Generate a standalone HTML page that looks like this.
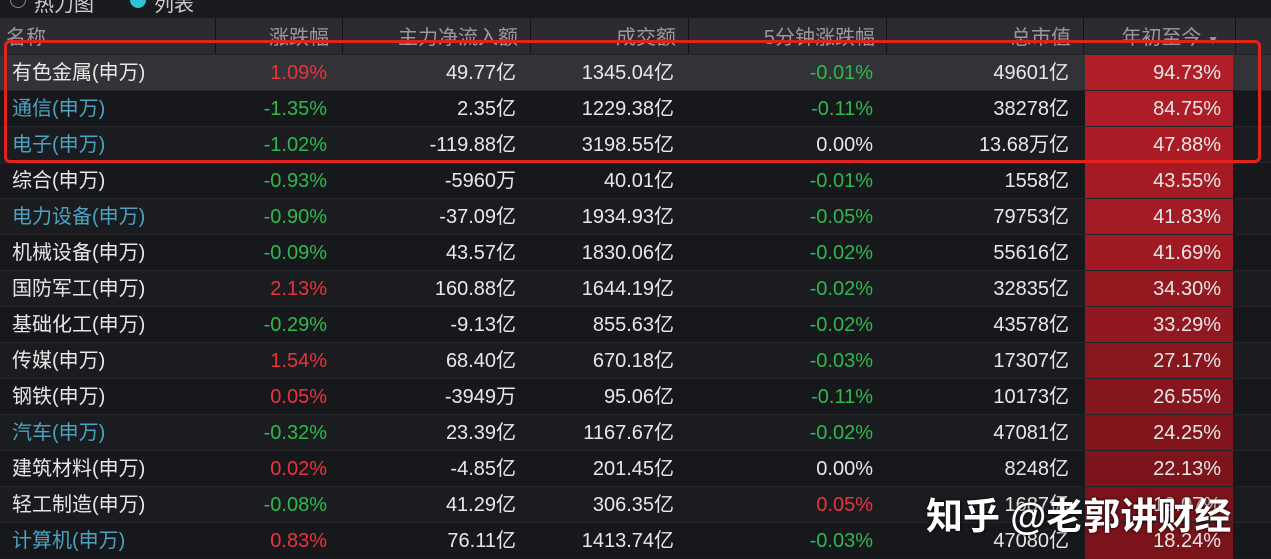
<!DOCTYPE html>
<html><head><meta charset="utf-8"><style>
*{margin:0;padding:0;box-sizing:border-box}
body{width:1271px;height:559px;background:#1a1b1f;font-family:"Liberation Sans","Noto Sans CJK SC",sans-serif;overflow:hidden;position:relative;color:#e8e8e8}
.top{position:absolute;left:0;top:0;width:1271px;height:18px;background:#1a1b1f;font-size:20px;color:#ccc}
.top span{position:absolute;top:-12px}
.radio{position:absolute;top:-8px;width:16px;height:16px;border-radius:50%;border:1px solid #888}
.hdr{position:absolute;left:0;top:18px;width:1271px;height:36px;background:#2b2c30;color:#9a9a9a;font-size:20px}
.row{position:absolute;left:0;width:1271px;height:36px;font-size:20px;border-top:1px solid #24252a}
.c{position:absolute;top:0;height:36px;line-height:36px;white-space:nowrap}
.hdr .c{line-height:40px}
.r{text-align:right}
.sep{position:absolute;top:0;width:1px;height:36px;background:#141418}
.red{color:#e8333f}.grn{color:#2fb84d}.blu{color:#4aa3c0}
.box{position:absolute;left:4px;top:40px;width:1257px;height:123px;border:3px solid #e3211d;border-radius:6px}
.wm{position:absolute;left:926px;top:486px;font-size:37px;color:#fff;font-weight:bold;text-shadow:0 0 3px #000}
</style></head><body>
<div class="top"><div class="radio" style="left:10px"></div><span style="left:34px">热力图</span><div class="radio" style="left:130px;border:4px solid #2ec4d4;background:#2ec4d4"></div><span style="left:154px">列表</span></div>
<div class="hdr">
<div class="c" style="left:6px">名称</div>
<div class="sep" style="left:215px"></div>
<div class="c r" style="right:942px">涨跌幅</div>
<div class="sep" style="left:342px"></div>
<div class="c r" style="right:753px">主力净流入额</div>
<div class="sep" style="left:530px"></div>
<div class="c r" style="right:595px">成交额</div>
<div class="sep" style="left:688px"></div>
<div class="c r" style="right:396px">5分钟涨跌幅</div>
<div class="sep" style="left:886px"></div>
<div class="c r" style="right:200px">总市值</div>
<div class="sep" style="left:1083px"></div>
<div class="c r" style="right:52px">年初至今 <span style="font-size:12px">▼</span></div>
<div class="sep" style="left:1235px"></div>
</div>
<div id="rows"></div>
<script>
var d=[
["有色金属(申万)","","1.09%","red","49.77亿","1345.04亿","-0.01%","grn","49601亿","94.73%","#b01e28"],
["通信(申万)","blu","-1.35%","grn","2.35亿","1229.38亿","-0.11%","grn","38278亿","84.75%","#ad1d27"],
["电子(申万)","blu","-1.02%","grn","-119.88亿","3198.55亿","0.00%","","13.68万亿","47.88%","#a91c26"],
["综合(申万)","","-0.93%","grn","-5960万","40.01亿","-0.01%","grn","1558亿","43.55%","#a51b24"],
["电力设备(申万)","blu","-0.90%","grn","-37.09亿","1934.93亿","-0.05%","grn","79753亿","41.83%","#a21a23"],
["机械设备(申万)","","-0.09%","grn","43.57亿","1830.06亿","-0.02%","grn","55616亿","41.69%","#a01a23"],
["国防军工(申万)","","2.13%","red","160.88亿","1644.19亿","-0.02%","grn","32835亿","34.30%","#931820"],
["基础化工(申万)","","-0.29%","grn","-9.13亿","855.63亿","-0.02%","grn","43578亿","33.29%","#911820"],
["传媒(申万)","","1.54%","red","68.40亿","670.18亿","-0.03%","grn","17307亿","27.17%","#87161d"],
["钢铁(申万)","","0.05%","red","-3949万","95.06亿","-0.11%","grn","10173亿","26.55%","#86161d"],
["汽车(申万)","blu","-0.32%","grn","23.39亿","1167.67亿","-0.02%","grn","47081亿","24.25%","#82151c"],
["建筑材料(申万)","","0.02%","red","-4.85亿","201.45亿","0.00%","","8248亿","22.13%","#7e141b"],
["轻工制造(申万)","","-0.08%","grn","41.29亿","306.35亿","0.05%","red","1687亿","19.07%","#7b141a"],
["计算机(申万)","blu","0.83%","red","76.11亿","1413.74亿","-0.03%","grn","47080亿","18.24%","#7a131a"]];
var h="";
d.forEach(function(r,i){
var bg=i==0?"#323337":(i%2?"#17181c":"#1b1c20");
h+='<div class="row" style="top:'+(54+i*36)+'px;background:'+bg+'">'+
'<div class="c '+r[1]+'" style="left:12px">'+r[0]+'</div>'+
'<div class="c r '+r[3]+'" style="right:944px">'+r[2]+'</div>'+
'<div class="c r" style="right:755px">'+r[4]+'</div>'+
'<div class="c r" style="right:597px">'+r[5]+'</div>'+
'<div class="c r '+r[7]+'" style="right:398px">'+r[6]+'</div>'+
'<div class="c r" style="right:202px">'+r[8]+'</div>'+
'<div class="c" style="left:1085px;width:148px;background:'+r[10]+'"></div>'+
'<div class="c r" style="right:50px">'+r[9]+'</div></div>';});
document.getElementById("rows").innerHTML=h;
</script>
<div class="box"></div>
<div class="wm">知乎 @老郭讲财经</div>
</body></html>
